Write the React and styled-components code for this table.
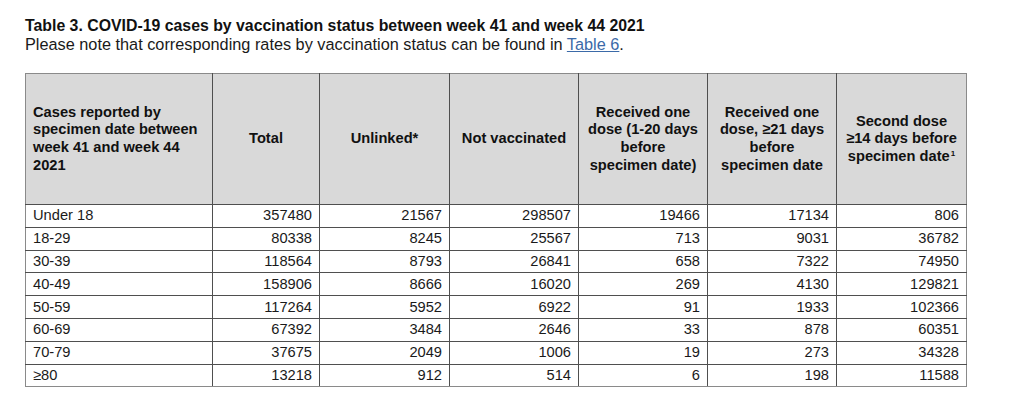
import React from "react";
import styled, { createGlobalStyle } from "styled-components";

const GlobalStyle = createGlobalStyle`
  body {
    margin: 0;
    background: #ffffff;
    font-family: "Liberation Sans", Arial, sans-serif;
    color: #1a1a1a;
  }
`;

const columns = [
  { label: "Cases reported by specimen date between week 41 and week 44 2021", width: 187, left: true },
  { label: "Total", width: 107 },
  { label: "Unlinked*", width: 130 },
  { label: "Not vaccinated", width: 129 },
  { label: "Received one dose (1-20 days before specimen date)", width: 129 },
  { label: "Received one dose, \u226521 days before specimen date", width: 129 },
  { label: "Second dose \u226514 days before specimen date", width: 130, sup: "1" },
];

const rows = [
  ["Under 18", 357480, 21567, 298507, 19466, 17134, 806],
  ["18-29", 80338, 8245, 25567, 713, 9031, 36782],
  ["30-39", 118564, 8793, 26841, 658, 7322, 74950],
  ["40-49", 158906, 8666, 16020, 269, 4130, 129821],
  ["50-59", 117264, 5952, 6922, 91, 1933, 102366],
  ["60-69", 67392, 3484, 2646, 33, 878, 60351],
  ["70-79", 37675, 2049, 1006, 19, 273, 34328],
  ["\u226580", 13218, 912, 514, 6, 198, 11588],
];

function App() {
  return (
    <>
      <GlobalStyle />
      <PageStyled>
        <TitleStyled>
          Table 3. COVID-19 cases by vaccination status between week 41 and week 44 2021
        </TitleStyled>
        <NoteStyled>
          Please note that corresponding rates by vaccination status can be found in{" "}
          <LinkStyled href="#">Table 6</LinkStyled>.
        </NoteStyled>
        <TableStyled>
          <colgroup>
            {columns.map((c, i) => (
              <col key={i} style={{ width: c.width }} />
            ))}
          </colgroup>
          <thead>
            <tr>
              {columns.map((c, i) => (
                <HeadCell key={i} $left={c.left}>
                  <HeadText>
                    {c.label}
                    {c.sup && <SupStyled>{c.sup}</SupStyled>}
                  </HeadText>
                </HeadCell>
              ))}
            </tr>
          </thead>
          <tbody>
            {rows.map((r) => (
              <tr key={r[0]}>
                {r.map((v, i) => (
                  <BodyCell key={i} $left={i === 0}>
                    {v}
                  </BodyCell>
                ))}
              </tr>
            ))}
          </tbody>
        </TableStyled>
      </PageStyled>
    </>
  );
}

const PageStyled = styled.div`
  padding: 16px 0 0 25px;
`;

const TitleStyled = styled.h3`
  margin: 0;
  font-size: 15.85px;
  line-height: 19px;
  font-weight: bold;
  color: #111;
`;

const NoteStyled = styled.p`
  margin: 0;
  font-size: 16.3px;
  line-height: 19px;
  color: #1a1a1a;
`;

const LinkStyled = styled.a`
  color: #3b6aa8;
  text-decoration: underline;
`;

const TableStyled = styled.table`
  margin-top: 19px;
  border-collapse: collapse;
  table-layout: fixed;
  width: 940px;
  border: 1px solid #8a8a8a;
  font-size: 14.67px;
`;

const HeadCell = styled.th`
  height: 130px;
  padding: 0 7px;
  background: #d9d9d9;
  border: 1px solid #4f4f4f;
  border-top-color: #8a8a8a;
  text-align: ${(p) => (p.$left ? "left" : "center")};
  vertical-align: middle;
  &:first-child {
    border-left-color: #8a8a8a;
  }
  &:last-child {
    border-right-color: #8a8a8a;
  }
`;

const HeadText = styled.div`
  font-weight: bold;
  line-height: 17.6px;
  color: #111;
`;

const SupStyled = styled.span`
  display: inline-block;
  margin: 2px 0 0 1px;
  font-size: 8px;
  line-height: 8px;
  vertical-align: top;
`;

const BodyCell = styled.td`
  height: 21.8px;
  padding: 0 7px;
  border: 1px solid #4f4f4f;
  line-height: 17px;
  color: #1a1a1a;
  text-align: ${(p) => (p.$left ? "left" : "right")};
  &:first-child {
    border-left-color: #8a8a8a;
  }
  &:last-child {
    border-right-color: #8a8a8a;
  }
  tr:last-child > & {
    border-bottom-color: #8a8a8a;
  }
`;

export default App;
